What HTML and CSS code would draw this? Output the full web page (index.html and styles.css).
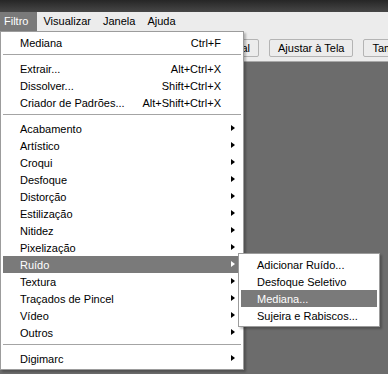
FILE: index.html
```html
<!DOCTYPE html>
<html lang="pt">
<head>
    <meta charset="UTF-8">
    <meta name="viewport" content="width=device-width, initial-scale=1.0">
    <title>Filtro</title>
    <link rel="stylesheet" href="styles.css">
</head>
<body>
    <div class="title-bar"></div>
    <div class="menu-bar">
        <span class="menu-title active">Filtro</span>
        <span class="menu-title">Visualizar</span>
        <span class="menu-title">Janela</span>
        <span class="menu-title">Ajuda</span>
    </div>
    <div class="workspace">
        <div class="toolbar">
            <button class="tool-btn first">Real</button>
            <button class="tool-btn">Ajustar à Tela</button>
            <button class="tool-btn">Tamanho de Impressão</button>
        </div>

        <div class="dropdown">
            <div class="item"><span>Mediana</span><span class="key">Ctrl+F</span></div>
            <div class="sep"></div>
            <div class="item"><span>Extrair...</span><span class="key">Alt+Ctrl+X</span></div>
            <div class="item"><span>Dissolver...</span><span class="key">Shift+Ctrl+X</span></div>
            <div class="item"><span>Criador de Padrões...</span><span class="key">Alt+Shift+Ctrl+X</span></div>
            <div class="sep"></div>
            <div class="item sub"><span>Acabamento</span></div>
            <div class="item sub"><span>Artístico</span></div>
            <div class="item sub"><span>Croqui</span></div>
            <div class="item sub"><span>Desfoque</span></div>
            <div class="item sub"><span>Distorção</span></div>
            <div class="item sub"><span>Estilização</span></div>
            <div class="item sub"><span>Nitidez</span></div>
            <div class="item sub"><span>Pixelização</span></div>
            <div class="item sub selected">
                <span>Ruído</span>
                <div class="submenu">
                    <div class="item"><span>Adicionar Ruído...</span></div>
                    <div class="item"><span>Desfoque Seletivo</span></div>
                    <div class="item selected"><span>Mediana...</span></div>
                    <div class="item"><span>Sujeira e Rabiscos...</span></div>
                </div>
            </div>
            <div class="item sub"><span>Textura</span></div>
            <div class="item sub"><span>Traçados de Pincel</span></div>
            <div class="item sub"><span>Vídeo</span></div>
            <div class="item sub"><span>Outros</span></div>
            <div class="sep"></div>
            <div class="item sub"><span>Digimarc</span></div>
        </div>
    </div>
</body>
</html>
```

FILE: styles.css
```css
body {
    margin: 0;
    padding: 0;
    width: 388px;
    height: 374px;
    overflow: hidden;
    background-color: #6c6c6c;
    font-family: "Liberation Sans", Arial, sans-serif;
    font-size: 11px;
    color: #000;
}

.title-bar {
    height: 12px;
    background: linear-gradient(#262626, #474747);
}

.menu-bar {
    height: 19px;
    display: flex;
    background-color: #ececec;
}

.menu-title {
    padding: 0 6px;
    line-height: 19px;
}

.menu-title.active {
    padding-left: 4px;
    padding-right: 9px;
    background-color: #7a7a7a;
    color: #fff;
}

.workspace {
    position: relative;
}

.toolbar {
    height: 31px;
    display: flex;
    align-items: center;
    gap: 10px;
    padding-left: 199px;
    background-color: #ececec;
    border-bottom: 1px solid #a8a8a8;
    box-sizing: border-box;
}

.tool-btn {
    flex-shrink: 0;
    box-sizing: border-box;
    height: 18px;
    padding: 0 8px;
    margin-top: 3px;
    font-family: "Liberation Sans", Arial, sans-serif;
    font-size: 11px;
    white-space: nowrap;
    background-color: #ececec;
    border: 1px solid #b4b4b4;
    border-radius: 2px;
    color: #000;
}

.tool-btn.first {
    width: 60px;
    text-align: right;
}

.dropdown {
    position: absolute;
    top: 0;
    left: 0;
    width: 238px;
    padding: 2px;
    background-color: #fff;
    border: 1px solid #9c9c9c;
    box-shadow: 2px 2px 2px rgba(0, 0, 0, 0.25);
}

.item {
    position: relative;
    height: 17px;
    display: flex;
    align-items: center;
    justify-content: space-between;
    padding: 0 20px 0 17px;
    white-space: nowrap;
}

.item.sub::after {
    content: "";
    position: absolute;
    right: 6px;
    top: 5px;
    border-left: 4px solid #000;
    border-top: 3.5px solid transparent;
    border-bottom: 3.5px solid transparent;
}

.item.selected {
    background-color: #7a7a7a;
    color: #fff;
}

.item.selected::after {
    border-left-color: #fff;
}

.sep {
    height: 1px;
    margin: 3px 0 5px;
    background-color: #a4a4a4;
}

.submenu {
    position: absolute;
    top: -3px;
    left: 235px;
    width: 136px;
    padding: 2px;
    background-color: #fff;
    border: 1px solid #9c9c9c;
    box-shadow: 2px 2px 2px rgba(0, 0, 0, 0.25);
    color: #000;
}

.submenu .item {
    padding-left: 16px;
}
```
